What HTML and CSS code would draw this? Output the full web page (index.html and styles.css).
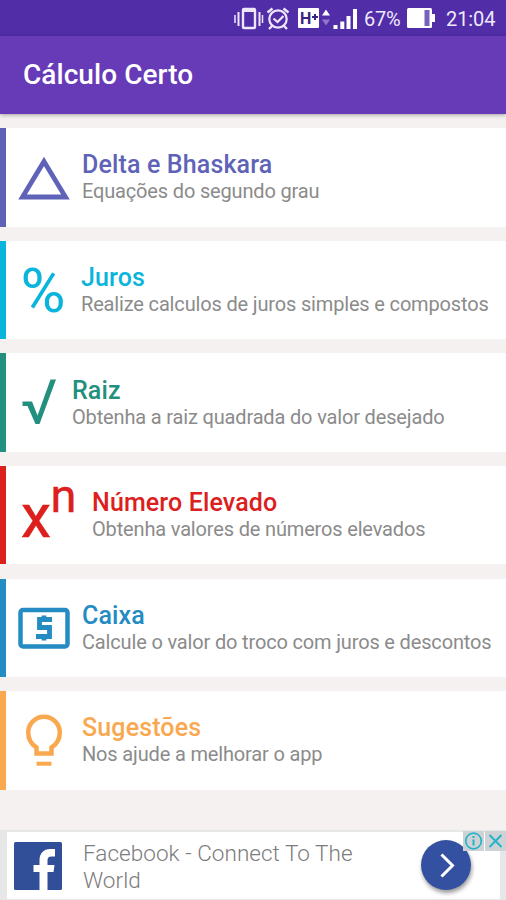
FILE: index.html
```html
<!DOCTYPE html>
<html lang="pt-BR">
<head>
<meta charset="utf-8">
<title>Cálculo Certo</title>
<link rel="stylesheet" href="styles.css">
</head>
<body>
<div class="status">
  <svg class="status-icons" width="130" height="36" viewBox="230 0 130 36" fill="none" stroke="#eee6fb">
    <rect x="243" y="9" width="12" height="19" rx="1" stroke-width="2.4"/>
    <path d="M243 10.500h12" stroke-width="3"/>
    <path d="M238.500 12v14M259.500 12v14" stroke-width="2"/>
    <path d="M235 15v8M262.500 15v8" stroke-width="1.500"/>
    <circle cx="278" cy="19" r="8.700" stroke-width="2.200"/>
    <path d="M267.500 12.500l5-4M288.500 12.500l-5-4M272 26l-3 3M284 26l3 3" stroke-width="2.400"/>
    <path d="M273.500 18.500l4 3.500 6-6" stroke-width="2.200"/>
    <rect x="298" y="8" width="21" height="20" rx="1" fill="#fff" stroke="none"/>
    <text class="network" x="300" y="23.500">H</text>
    <path d="M312 17h6M315 14v6" stroke="#3b2285" stroke-width="2"/>
    <path d="M322 15.500l4-6 4 6z" fill="#fff" stroke="none"/>
    <path d="M322 19.500l4 6 4-6z" fill="#9278cc" stroke="none"/>
    <path d="M335.500 25v4M342.300 21.500v7.500M348.500 16v13M355 9v20" stroke="#fff" stroke-width="4"/>
  </svg>
  <span class="percent">67%</span>
  <svg class="battery" width="28" height="20" viewBox="0 0 28 20">
    <rect x="0" y="0" width="25" height="20" rx="1.500" fill="#fff"/>
    <rect x="17.500" y="2" width="5" height="16" fill="#7960bd"/>
    <path d="M25 6h3v8h-3z" fill="#fff"/>
  </svg>
  <span class="clock">21:04</span>
</div>
<header class="appbar"><h1>Cálculo Certo</h1></header>
<main class="list">
  <section class="card delta">
    <svg width="76" height="98" viewBox="6 0 76 98"><path d="M44 33.500L65.500 69H22.500Z" fill="none" stroke="currentColor" stroke-width="4.800"/></svg>
    <div class="copy"><h2>Delta e Bhaskara</h2><p>Equações do segundo grau</p></div>
  </section>
  <section class="card juros">
    <svg width="75" height="98" viewBox="6 0 75 98"><text class="symbol" x="20.500" y="71" font-size="62" textLength="45" lengthAdjust="spacingAndGlyphs">%</text></svg>
    <div class="copy"><h2>Juros</h2><p>Realize calculos de juros simples e compostos</p></div>
  </section>
  <section class="card raiz">
    <svg width="66" height="98" viewBox="6 0 66 98"><path d="M22.500 48.500V53h5L35.500 71h4L56 26.500h-5.500L37.500 62.500 32 48.500z" fill="currentColor"/></svg>
    <div class="copy"><h2>Raiz</h2><p>Obtenha a raiz quadrada do valor desejado</p></div>
  </section>
  <section class="card elevado">
    <svg width="86" height="98" viewBox="6 0 86 98"><text class="symbol base" x="21" y="70.500" font-size="62" textLength="30" lengthAdjust="spacingAndGlyphs">x</text><text class="symbol exponent" x="50.500" y="46" font-size="47">n</text></svg>
    <div class="copy"><h2>Número Elevado</h2><p>Obtenha valores de números elevados</p></div>
  </section>
  <section class="card caixa">
    <svg width="76" height="98" viewBox="6 0 76 98" fill="none" stroke="currentColor"><rect x="20.500" y="31" width="47" height="36.500" rx="2.500" stroke-width="4.500"/><path d="M52 40.500H39.500V48.500H49.500V57.500H36M44 36.500v5M44 56.500v5" stroke-width="4.800"/></svg>
    <div class="copy"><h2>Caixa</h2><p>Calcule o valor do troco com juros e descontos</p></div>
  </section>
  <section class="card sugestoes">
    <svg width="76" height="98" viewBox="6 0 76 98" fill="none" stroke="currentColor" stroke-width="4.500"><path d="M36.500 62.500V56.500C31 53 28.200 47.500 28.200 41.500a15.800 15.800 0 0 1 31.600 0C59.800 47.500 57 53 51.500 56.500V62.500Z"/><path d="M36.500 72.700h15" stroke-width="4"/></svg>
    <div class="copy"><h2>Sugestões</h2><p>Nos ajude a melhorar o app</p></div>
  </section>
</main>
<aside class="ad">
  <svg class="fb" width="48" height="48" viewBox="0 0 48 48"><rect width="48" height="48" rx="1.500" fill="#304f98"/><path d="M25.500 48V30H19.500V23h6v-4.500C25.500 11 30 7 36 7h5v7.500h-3.500c-3 0-4 1.500-4 4V23h7l-1 7h-6v18z" fill="#fff"/></svg>
  <p class="ad-text">Facebook - Connect To The World</p>
  <div class="go"><svg width="50" height="50" viewBox="0 0 50 50"><path d="M20.500 14.500L31.500 25.500 20.500 36.500" fill="none" stroke="#fff" stroke-width="3"/></svg></div>
  <div class="choices">
    <svg width="21" height="20" viewBox="0 0 21 20" fill="none" stroke="#23b3c8" stroke-width="1.700"><circle cx="10.500" cy="10" r="7.800"/><path d="M10.500 8.500v6M10.500 5v2" stroke-width="2"/></svg>
    <svg width="21" height="20" viewBox="0 0 21 20" fill="none" stroke="#23b3c8" stroke-width="2"><path d="M4.500 4l12 12M16.500 4l-12 12"/></svg>
  </div>
</aside>
</body>
</html>
```
FILE: styles.css
```css
* { box-sizing: border-box; }
body {
  margin: 0;
  width: 506px;
  height: 900px;
  overflow: hidden;
  display: flex;
  flex-direction: column;
  background: #f5f1f0;
  font-family: Roboto, sans-serif;
}
h1, h2, p { margin: 0; white-space: nowrap; }
svg { display: block; flex: none; }
.status {
  height: 36px;
  flex: none;
  display: flex;
  align-items: center;
  padding-left: 230px;
  background: #512da8;
  color: #eee8fa;
  font-size: 20px;
}
.network { font: 700 16px Roboto, sans-serif; fill: #3b2285; stroke: none; }
.percent { width: 43px; margin-left: 4px; letter-spacing: -.2px; padding-top: 2px; }
.clock { margin-left: 11px; padding-top: 2px; letter-spacing: -.1px; }
.appbar {
  height: 78px;
  flex: none;
  display: flex;
  align-items: center;
  padding-left: 23px;
  background: #673ab7;
  box-shadow: 0 1px 4px #0005;
}
h1 { color: #fff; font-size: 28px; font-weight: 500; line-height: 36px; letter-spacing: .06px; }
.list { display: flex; flex-direction: column; gap: 14.1px; padding-top: 14.2px; }
.card {
  height: 98.5px;
  display: flex;
  background: #fff;
  border-left: 6px solid currentColor;
}
.copy { padding-top: 24.3px; }
h2 { font-size: 25px; font-weight: 500; line-height: 26px; letter-spacing: .14px; }
.card p { color: #8b8b8b; font-size: 20px; line-height: 26px; letter-spacing: -.16px; }
.symbol { font-family: Roboto, sans-serif; fill: currentColor; }
.base { stroke: currentColor; stroke-width: .6px; }
.exponent { stroke: currentColor; stroke-width: .4px; }
.delta { color: #5f63b8; }
.delta p { margin-top: -.5px; }
.juros { color: #0bb4dc; }
.raiz { color: #238f7e; }
.elevado { color: #dc201d; }
.caixa { color: #248bc3; }
.sugestoes { color: #f9a850; }
.ad {
  position: relative;
  height: 70px;
  margin-top: auto;
  display: flex;
  align-items: flex-start;
  background: #fff;
  border: solid #e7e7e7;
  border-width: 2px 6px 1px 7px;
}
.fb { margin: 10px 0 0 7px; }
.ad-text {
  width: 300px;
  margin: 8px 0 0 21px;
  color: #7c7c7c;
  font-size: 22.5px;
  font-weight: 300;
  line-height: 27px;
  letter-spacing: .04px;
  white-space: normal;
}
.go {
  margin: 8px 0 0 38px;
  width: 50px;
  height: 50px;
  border-radius: 50%;
  background: #3450a0;
  box-shadow: 1px 3px 4px #0006;
}
.choices { position: absolute; top: -1px; right: -6px; display: flex; gap: 1px; }
.choices svg { background: #cfd2d5; }
```
